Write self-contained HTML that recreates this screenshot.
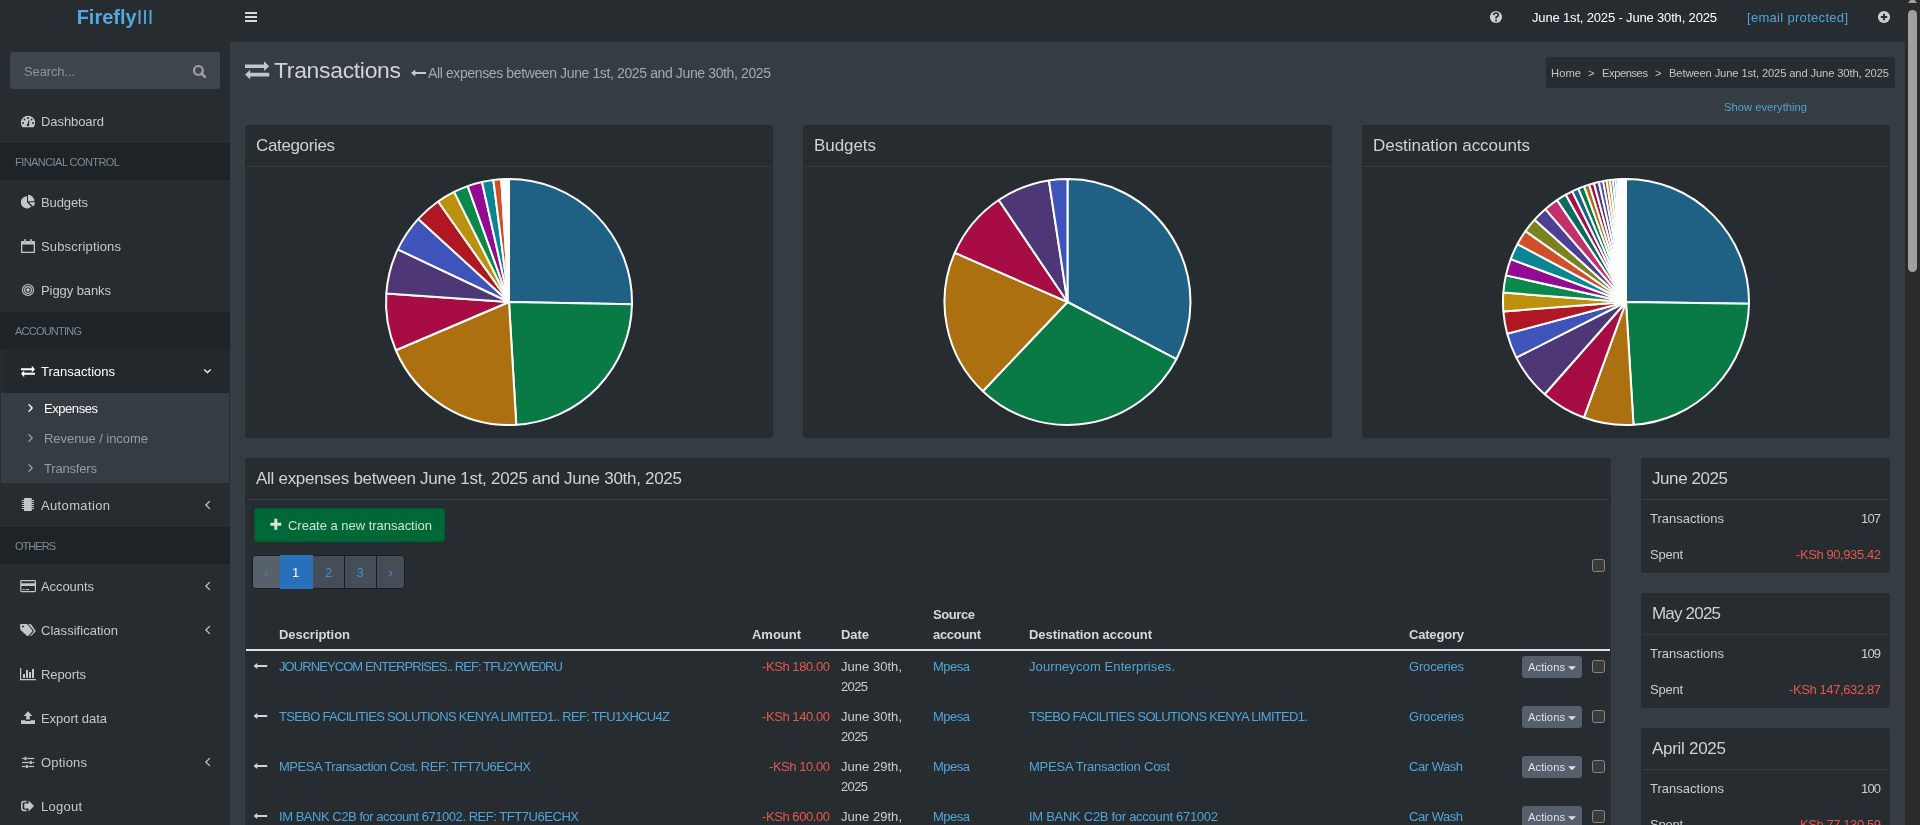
<!DOCTYPE html>
<html><head><meta charset="utf-8"><title>Firefly III</title><style>
*{box-sizing:border-box;margin:0;padding:0}
html,body{width:1920px;height:825px;overflow:hidden;background:#353c42;font-family:"Liberation Sans",sans-serif;}
#root{position:absolute;left:0;top:0;width:1920px;height:825px;overflow:hidden;will-change:transform}
.abs{position:absolute}
.t{position:absolute;white-space:nowrap;line-height:20px;height:20px}
.box{position:absolute;background:#272c30;border-radius:3px}
.hr{position:absolute;height:1px;background:#343a3f}
</style></head>
<body><div id="root">
<div class="abs" style="left:0px;top:0px;width:1905px;height:42px;background:#272c30;"></div>
<div class="abs" style="left:0px;top:42px;width:230px;height:783px;background:#272c30;"></div>
<div class="abs" style="left:0;top:0;width:230px;height:34px;line-height:35px;text-align:center;font-size:20px;color:#52a9dd;white-space:nowrap"><b>Firefly</b><span style="font-weight:400">III</span></div>
<div class="abs" style="left:10px;top:52px;width:210px;height:37px;background:#3e454d;border-radius:3px"></div>
<div class="abs" style="left:0px;top:143px;width:230px;height:37px;background:#1e2326;"></div>
<div class="abs" style="left:0px;top:312px;width:230px;height:37px;background:#1e2326;"></div>
<div class="abs" style="left:0px;top:527px;width:230px;height:37px;background:#1e2326;"></div>
<div class="abs" style="left:0px;top:349px;width:230px;height:44px;background:#23282c;border-left:3px solid #272c30"></div>
<div class="abs" style="left:1px;top:393px;width:228px;height:90px;background:#353c42;"></div>
<div class="abs" style="left:1905px;top:0px;width:15px;height:825px;background:#2b2b2b;"></div>
<div class="abs" style="left:1908px;top:10px;width:9px;height:262px;background:#a0a0a0;border-radius:4.5px"></div>
<svg class="abs" style="left:1905px;top:0" width="15" height="6"><path d="M3 3L7.5 -3L12 3Z" fill="#a0a0a0"/></svg>
<div class="abs" style="left:1546px;top:57px;width:349px;height:31px;background:#272c30;border-radius:2px"></div>
<div class="abs" style="left:245px;top:125px;width:528px;height:313px;background:#272c30;border-radius:3px"></div>
<div class="abs" style="left:246px;top:166px;width:526px;height:1px;background:#353c42;"></div>
<div class="abs" style="left:803px;top:125px;width:529px;height:313px;background:#272c30;border-radius:3px"></div>
<div class="abs" style="left:804px;top:166px;width:527px;height:1px;background:#353c42;"></div>
<div class="abs" style="left:1362px;top:125px;width:528px;height:313px;background:#272c30;border-radius:3px"></div>
<div class="abs" style="left:1363px;top:166px;width:526px;height:1px;background:#353c42;"></div>
<div class="abs" style="left:245px;top:458px;width:1366px;height:400px;background:#272c30;border-radius:3px"></div>
<div class="abs" style="left:246px;top:499px;width:1364px;height:1px;background:#353c42;"></div>
<div class="abs" style="left:1641px;top:458px;width:249px;height:115px;background:#272c30;border-radius:3px"></div>
<div class="abs" style="left:1642px;top:499px;width:247px;height:1px;background:#353c42;"></div>
<div class="abs" style="left:1641px;top:593px;width:249px;height:115px;background:#272c30;border-radius:3px"></div>
<div class="abs" style="left:1642px;top:634px;width:247px;height:1px;background:#353c42;"></div>
<div class="abs" style="left:1641px;top:728px;width:249px;height:115px;background:#272c30;border-radius:3px"></div>
<div class="abs" style="left:1642px;top:769px;width:247px;height:1px;background:#353c42;"></div>
<div class="abs" style="left:254px;top:508px;width:191px;height:34px;background:#006837;border-radius:3px;border:1px solid #005c30"></div>
<div class="abs" style="left:252px;top:555px;width:153px;height:34px;background:#454e57;border-radius:4px;border:1px solid #191c1f"></div>
<div class="abs" style="left:253px;top:556px;width:27px;height:32px;background:#56616c;border-radius:3px 0 0 3px"></div>
<div class="abs" style="left:280px;top:555px;width:33px;height:34px;background:#2970bb;"></div>
<div class="abs" style="left:344px;top:556px;width:1px;height:32px;background:#191c1f;"></div>
<div class="abs" style="left:376px;top:556px;width:1px;height:32px;background:#191c1f;"></div>
<div class="abs" style="left:246px;top:649px;width:1364px;height:2px;background:#dfe4ec;"></div>
<div class="abs" style="left:1592px;top:559px;width:13px;height:13px;background:#3b3b3b;border:1px solid #8a8782;border-radius:2.5px"></div>
<div class="abs" style="left:1592px;top:660px;width:13px;height:13px;background:#3b3b3b;border:1px solid #8a8782;border-radius:2.5px"></div>
<div class="abs" style="left:1592px;top:710px;width:13px;height:13px;background:#3b3b3b;border:1px solid #8a8782;border-radius:2.5px"></div>
<div class="abs" style="left:1592px;top:760px;width:13px;height:13px;background:#3b3b3b;border:1px solid #8a8782;border-radius:2.5px"></div>
<div class="abs" style="left:1592px;top:810px;width:13px;height:13px;background:#3b3b3b;border:1px solid #8a8782;border-radius:2.5px"></div>
<div class="abs" style="left:1522px;top:656px;width:60px;height:22px;background:#55606c;border-radius:3px"></div>
<div class="abs" style="left:1522px;top:706px;width:60px;height:22px;background:#55606c;border-radius:3px"></div>
<div class="abs" style="left:1522px;top:756px;width:60px;height:22px;background:#55606c;border-radius:3px"></div>
<div class="abs" style="left:1522px;top:806px;width:60px;height:22px;background:#55606c;border-radius:3px"></div>
<svg class="abs" style="left:230px;top:160px" width="1675" height="290" viewBox="230 160 1675 290"><g stroke="#fff" stroke-width="2" stroke-linejoin="bevel">
<path d="M509 302L509.00 179.00A123 123 0 0 1 631.98 304.36Z" fill="#1f6184"/>
<path d="M509 302L631.98 304.36A123 123 0 0 1 516.29 424.78Z" fill="#097945"/>
<path d="M509 302L516.29 424.78A123 123 0 0 1 395.86 350.26Z" fill="#ac7010"/>
<path d="M509 302L395.86 350.26A123 123 0 0 1 386.30 293.42Z" fill="#a80c45"/>
<path d="M509 302L386.30 293.42A123 123 0 0 1 397.80 249.43Z" fill="#4d3776"/>
<path d="M509 302L397.80 249.43A123 123 0 0 1 418.31 218.90Z" fill="#3f54bb"/>
<path d="M509 302L418.31 218.90A123 123 0 0 1 438.10 201.49Z" fill="#b11722"/>
<path d="M509 302L438.10 201.49A123 123 0 0 1 454.12 191.92Z" fill="#bb910e"/>
<path d="M509 302L454.12 191.92A123 123 0 0 1 467.74 186.13Z" fill="#0b894d"/>
<path d="M509 302L467.74 186.13A123 123 0 0 1 481.96 182.01Z" fill="#920b92"/>
<path d="M509 302L481.96 182.01A123 123 0 0 1 493.37 180.00Z" fill="#0b8594"/>
<path d="M509 302L493.37 180.00A123 123 0 0 1 501.28 179.24Z" fill="#cf4f29"/>
<path d="M509 302L501.28 179.24A123 123 0 0 1 503.42 179.13Z" fill="#7b8320"/>
<path d="M509 302L503.42 179.13A123 123 0 0 1 504.92 179.07Z" fill="#4e3f94"/>
<path d="M509 302L504.92 179.07A123 123 0 0 1 506.21 179.03Z" fill="#c3306b"/>
<path d="M509 302L506.21 179.03A123 123 0 0 1 507.28 179.01Z" fill="#0b6b5f"/>
<path d="M509 302L507.28 179.01A123 123 0 0 1 508.14 179.00Z" fill="#a1124a"/>
<path d="M509 302L508.14 179.00A123 123 0 0 1 509.00 179.00Z" fill="#1f6184"/>
</g><g stroke="#fff" stroke-width="2" stroke-linejoin="bevel">
<path d="M1067.5 302L1067.50 179.00A123 123 0 0 1 1176.40 359.18Z" fill="#1f6184"/>
<path d="M1067.5 302L1176.40 359.18A123 123 0 0 1 982.83 391.22Z" fill="#097945"/>
<path d="M1067.5 302L982.83 391.22A123 123 0 0 1 954.79 252.76Z" fill="#ac7010"/>
<path d="M1067.5 302L954.79 252.76A123 123 0 0 1 998.72 200.03Z" fill="#a80c45"/>
<path d="M1067.5 302L998.72 200.03A123 123 0 0 1 1048.89 180.42Z" fill="#4d3776"/>
<path d="M1067.5 302L1048.89 180.42A123 123 0 0 1 1067.50 179.00Z" fill="#3f54bb"/>
</g><g stroke="#fff" stroke-width="2" stroke-linejoin="bevel">
<path d="M1626 302L1626.00 179.00A123 123 0 0 1 1748.99 303.72Z" fill="#1f6184"/>
<path d="M1626 302L1748.99 303.72A123 123 0 0 1 1633.51 424.77Z" fill="#097945"/>
<path d="M1626 302L1633.51 424.77A123 123 0 0 1 1583.83 417.55Z" fill="#ac7010"/>
<path d="M1626 302L1583.83 417.55A123 123 0 0 1 1544.66 394.26Z" fill="#a80c45"/>
<path d="M1626 302L1544.66 394.26A123 123 0 0 1 1516.31 357.65Z" fill="#4d3776"/>
<path d="M1626 302L1516.31 357.65A123 123 0 0 1 1507.19 333.83Z" fill="#3f54bb"/>
<path d="M1626 302L1507.19 333.83A123 123 0 0 1 1503.36 311.44Z" fill="#b11722"/>
<path d="M1626 302L1503.36 311.44A123 123 0 0 1 1503.36 292.56Z" fill="#bb910e"/>
<path d="M1626 302L1503.36 292.56A123 123 0 0 1 1505.92 275.38Z" fill="#0b894d"/>
<path d="M1626 302L1505.92 275.38A123 123 0 0 1 1510.71 259.13Z" fill="#920b92"/>
<path d="M1626 302L1510.71 259.13A123 123 0 0 1 1517.50 244.07Z" fill="#0b8594"/>
<path d="M1626 302L1517.50 244.07A123 123 0 0 1 1525.49 231.10Z" fill="#cf4f29"/>
<path d="M1626 302L1525.49 231.10A123 123 0 0 1 1534.59 219.70Z" fill="#7b8320"/>
<path d="M1626 302L1534.59 219.70A123 123 0 0 1 1545.30 209.17Z" fill="#4e3f94"/>
<path d="M1626 302L1545.30 209.17A123 123 0 0 1 1557.04 200.15Z" fill="#c3306b"/>
<path d="M1626 302L1557.04 200.15A123 123 0 0 1 1565.81 194.74Z" fill="#0b6b5f"/>
<path d="M1626 302L1565.81 194.74A123 123 0 0 1 1572.27 191.35Z" fill="#a1124a"/>
<path d="M1626 302L1572.27 191.35A123 123 0 0 1 1578.34 188.61Z" fill="#1f6184"/>
<path d="M1626 302L1578.34 188.61A123 123 0 0 1 1584.13 186.34Z" fill="#097945"/>
<path d="M1626 302L1584.13 186.34A123 123 0 0 1 1589.22 184.63Z" fill="#ac7010"/>
<path d="M1626 302L1589.22 184.63A123 123 0 0 1 1593.96 183.25Z" fill="#a80c45"/>
<path d="M1626 302L1593.96 183.25A123 123 0 0 1 1598.75 182.06Z" fill="#4d3776"/>
<path d="M1626 302L1598.75 182.06A123 123 0 0 1 1603.16 181.14Z" fill="#3f54bb"/>
<path d="M1626 302L1603.16 181.14A123 123 0 0 1 1606.55 180.55Z" fill="#b11722"/>
<path d="M1626 302L1606.55 180.55A123 123 0 0 1 1609.95 180.05Z" fill="#bb910e"/>
<path d="M1626 302L1609.95 180.05A123 123 0 0 1 1612.93 179.70Z" fill="#0b894d"/>
<path d="M1626 302L1612.93 179.70A123 123 0 0 1 1615.49 179.45Z" fill="#920b92"/>
<path d="M1626 302L1615.49 179.45A123 123 0 0 1 1617.85 179.27Z" fill="#0b8594"/>
<path d="M1626 302L1617.85 179.27A123 123 0 0 1 1619.78 179.16Z" fill="#cf4f29"/>
<path d="M1626 302L1619.78 179.16A123 123 0 0 1 1621.28 179.09Z" fill="#7b8320"/>
<path d="M1626 302L1621.28 179.09A123 123 0 0 1 1622.57 179.05Z" fill="#4e3f94"/>
<path d="M1626 302L1622.57 179.05A123 123 0 0 1 1623.64 179.02Z" fill="#c3306b"/>
<path d="M1626 302L1623.64 179.02A123 123 0 0 1 1624.50 179.01Z" fill="#0b6b5f"/>
<path d="M1626 302L1624.50 179.01A123 123 0 0 1 1625.14 179.00Z" fill="#a1124a"/>
<path d="M1626 302L1625.14 179.00A123 123 0 0 1 1625.57 179.00Z" fill="#1f6184"/>
<path d="M1626 302L1625.57 179.00A123 123 0 0 1 1626.00 179.00Z" fill="#097945"/>
</g></svg>
<svg class="abs" style="left:0;top:0" width="1920" height="825" viewBox="0 0 1920 825"><g fill="#d5dae0"><rect x="245" y="12" width="12" height="2"/><rect x="245" y="16" width="12" height="2"/><rect x="245" y="20" width="12" height="2"/></g>
<circle cx="1496" cy="17" r="6.1" fill="#c9ced4"/>
<path d="M1493.7 15.2Q1493.9 13 1496 13Q1498.3 13 1498.3 15Q1498.3 16.3 1496.1 17.3V18.6" fill="none" stroke="#272c30" stroke-width="1.7"/><rect x="1495.2" y="19.6" width="1.8" height="1.8" fill="#272c30"/>
<circle cx="1884" cy="17" r="6.1" fill="#c9ced4"/>
<path d="M1884 13.8V20.2M1880.8 17H1887.2" stroke="#272c30" stroke-width="1.9" fill="none"/>
<circle cx="198.4" cy="70.4" r="4.4" fill="none" stroke="#a3a3a3" stroke-width="2.1"/><path d="M201.6 73.6L204.9 76.9" stroke="#a3a3a3" stroke-width="2.4" stroke-linecap="round"/>
<path fill="#c2c7cc" d="M22.4 127.2A7.1 7.1 0 1 1 33.6 127.2Z"/>
<g fill="#272c30"><rect x="27.1" y="117.1" width="1.7" height="1.8"/><circle cx="24.5" cy="119.5" r="0.9"/><circle cx="31.6" cy="119.5" r="0.9"/><rect x="22.2" y="122.1" width="1.7" height="1.8"/><rect x="32.2" y="122.1" width="1.7" height="1.8"/><circle cx="28" cy="125" r="1.3"/><path d="M27.4 125L28.6 120.3L29.6 120.5L28.8 125Z"/></g>
<path fill="#c2c7cc" d="M27 202.3V196.2A6.1 6.1 0 1 0 31.3 206.6Z"/>
<path fill="#c2c7cc" d="M28 201.2V194.8A6.4 6.4 0 0 1 34.4 201.2Z"/>
<path fill="#c2c7cc" d="M29 202.3H34.9A6.1 6.1 0 0 1 33.2 206.5Z"/>
<path fill="#c2c7cc" fill-rule="evenodd" d="M21 241.8Q21 241 21.8 241H34.2Q35 241 35 241.8V252.2Q35 253 34.2 253H21.8Q21 253 21 252.2ZM22.3 244.4V251.8H33.7V244.4Z"/>
<rect x="24" y="239" width="2" height="4" rx="0.8" fill="#a9afb5"/><rect x="30" y="239" width="2" height="4" rx="0.8" fill="#a9afb5"/>
<circle cx="28" cy="290" r="5.5" fill="none" stroke="#c2c7cc" stroke-width="1.2"/><circle cx="28" cy="290" r="3.4" fill="none" stroke="#c2c7cc" stroke-width="1.1"/><circle cx="28" cy="290" r="1.7" fill="#c2c7cc"/>
<path fill="#ffffff" d="M35 369.2L31.8 365.8V368.2H21V370.2H31.8V372.59999999999997Z"/>
<path fill="#ffffff" d="M21 373.8L24.2 370.40000000000003V372.8H35V374.8H24.2V377.2Z"/>
<path d="M204.3 369.5L207.5 372.7L210.7 369.5" fill="none" stroke="#ffffff" stroke-width="1.3"/>
<path d="M28.6 404.2L32.2 408L28.6 411.8" fill="none" stroke="#ffffff" stroke-width="1.3"/>
<path d="M28.6 434.2L32.2 438L28.6 441.8" fill="none" stroke="#949da5" stroke-width="1.3"/>
<path d="M28.6 464.2L32.2 468L28.6 471.8" fill="none" stroke="#949da5" stroke-width="1.3"/>
<path d="M209.8 501.1L205.9 505L209.8 508.9" fill="none" stroke="#c2c7cc" stroke-width="1.3"/>
<path d="M209.8 582.1L205.9 586L209.8 589.9" fill="none" stroke="#c2c7cc" stroke-width="1.3"/>
<path d="M209.8 626.1L205.9 630L209.8 633.9" fill="none" stroke="#c2c7cc" stroke-width="1.3"/>
<path d="M209.8 758.1L205.9 762L209.8 765.9" fill="none" stroke="#c2c7cc" stroke-width="1.3"/>
<rect x="24" y="498" width="7.8" height="13" rx="0.6" fill="#c2c7cc"/>
<rect x="21.8" y="500" width="2.2" height="1" fill="#c2c7cc"/><rect x="31.8" y="500" width="2.2" height="1" fill="#c2c7cc"/>
<rect x="21.8" y="502" width="2.2" height="1" fill="#c2c7cc"/><rect x="31.8" y="502" width="2.2" height="1" fill="#c2c7cc"/>
<rect x="21.8" y="504" width="2.2" height="1" fill="#c2c7cc"/><rect x="31.8" y="504" width="2.2" height="1" fill="#c2c7cc"/>
<rect x="21.8" y="506" width="2.2" height="1" fill="#c2c7cc"/><rect x="31.8" y="506" width="2.2" height="1" fill="#c2c7cc"/>
<rect x="21.8" y="508" width="2.2" height="1" fill="#c2c7cc"/><rect x="31.8" y="508" width="2.2" height="1" fill="#c2c7cc"/>
<path fill="#c2c7cc" fill-rule="evenodd" d="M20.2 581.4Q20.2 580 21.6 580H34.6Q36 580 36 581.4V590.8Q36 592.2 34.6 592.2H21.6Q20.2 592.2 20.2 590.8ZM21.4 581.2V583.2H34.8V581.2ZM21.4 586V591H34.8V586Z"/>
<rect x="22.6" y="589" width="2.2" height="1" fill="#c2c7cc"/><rect x="25.8" y="589" width="3.2" height="1" fill="#c2c7cc"/>
<path fill="#c2c7cc" fill-rule="evenodd" d="M20.2 624.6Q20.2 624 20.8 624H26.2Q27 624 27.6 624.6L32.2 630.2Q32.8 631 32.2 631.7L28.3 635.7Q27.6 636.3 26.9 635.7L20.8 630.2Q20.2 629.6 20.2 628.8ZM23 625.5A1 1 0 1 0 23 627.5A1 1 0 1 0 23 625.5Z"/>
<path fill="#c2c7cc" d="M28.3 624H29.8Q30.6 624 31.2 624.6L35.3 630.2Q35.9 631 35.3 631.7L31.4 635.7Q30.7 636.3 30 635.9L33.6 631.7Q34.1 631 33.6 630.2Z"/>
<path fill="#c2c7cc" d="M20 668H21.2V679H36V680.2H20Z"/>
<g fill="#c2c7cc"><rect x="23" y="674" width="2" height="4"/><rect x="26" y="670" width="2" height="8"/><rect x="29" y="672" width="2" height="6"/><rect x="32" y="669" width="2" height="9"/></g>
<path fill="#c2c7cc" d="M28 711.3L32.4 716H29.8V719.6H26.2V716H23.6Z"/>
<path fill="#c2c7cc" d="M21 720.3H25.4V720.9H30.6V720.3H35V724H21Z"/>
<rect x="22" y="757.9" width="12.2" height="1.2" fill="#c2c7cc"/><rect x="24" y="756.9" width="3" height="3.2" fill="#c2c7cc" stroke="#272c30" stroke-width="0.5"/>
<rect x="22" y="761.9" width="12.2" height="1.2" fill="#c2c7cc"/><rect x="29.2" y="760.9" width="3" height="3.2" fill="#c2c7cc" stroke="#272c30" stroke-width="0.5"/>
<rect x="22" y="765.9" width="12.2" height="1.2" fill="#c2c7cc"/><rect x="25.2" y="764.9" width="3" height="3.2" fill="#c2c7cc" stroke="#272c30" stroke-width="0.5"/>
<path d="M26.6 801.6H24Q21.8 801.6 21.8 803.8V808.2Q21.8 810.4 24 810.4H26.6" fill="none" stroke="#c2c7cc" stroke-width="1.5"/>
<path fill="#c2c7cc" d="M24.3 803.6H28.6V800.6L34 806L28.6 811.4V808.4H24.3Z"/>
<path fill="#c0c6cc" d="M269.2 66.2L264.0 61.300000000000004V64.4H245V68.0H264.0V71.10000000000001Z"/>
<path fill="#c0c6cc" d="M245 74.6L250.2 69.69999999999999V72.8H269.2V76.39999999999999H250.2V79.5Z"/>
<path fill="#c5cbd2" d="M411 73L415.3 69.6V72.0H426V74.0H415.3V76.4Z"/>
<path fill="#d0d5db" d="M253.5 666L257.3 662.9V665.0H267.2V667.0H257.3V669.1Z"/>
<path fill="#d0d5db" d="M253.5 716L257.3 712.9V715.0H267.2V717.0H257.3V719.1Z"/>
<path fill="#d0d5db" d="M253.5 766L257.3 762.9V765.0H267.2V767.0H257.3V769.1Z"/>
<path fill="#d0d5db" d="M253.5 816L257.3 812.9V815.0H267.2V817.0H257.3V819.1Z"/>
<path d="M275.8 518.8V529.8M270.3 524.3H281.3" stroke="#d5e5dc" stroke-width="3" fill="none"/>
<path d="M1568 666.2H1576L1572 670.2Z" fill="#dde1e6"/>
<path d="M1568 716.2H1576L1572 720.2Z" fill="#dde1e6"/>
<path d="M1568 766.2H1576L1572 770.2Z" fill="#dde1e6"/>
<path d="M1568 816.2H1576L1572 820.2Z" fill="#dde1e6"/></svg>
<span class="t" style="left:1532px;top:8.0px;font-size:13px;color:#ffffff;letter-spacing:-0.164px;">June 1st, 2025 - June 30th, 2025</span>
<span class="t" style="left:1747px;top:8.0px;font-size:13px;color:#51a4d7;letter-spacing:0.306px;">[email protected]</span>
<span class="t" style="left:24px;top:62.0px;font-size:13px;color:#8d9399;letter-spacing:-0.129px;">Search...</span>
<span class="t" style="left:41px;top:112.0px;font-size:13px;color:#c5c8cb;letter-spacing:-0.076px;">Dashboard</span>
<span class="t" style="left:15px;top:152.0px;font-size:11px;color:#7f8b95;letter-spacing:-0.556px;">FINANCIAL CONTROL</span>
<span class="t" style="left:41px;top:193.0px;font-size:13px;color:#c5c8cb;letter-spacing:-0.117px;">Budgets</span>
<span class="t" style="left:41px;top:237.0px;font-size:13px;color:#c5c8cb;letter-spacing:0.163px;">Subscriptions</span>
<span class="t" style="left:41px;top:281.0px;font-size:13px;color:#c5c8cb;letter-spacing:-0.083px;">Piggy banks</span>
<span class="t" style="left:15px;top:321.0px;font-size:11px;color:#7f8b95;letter-spacing:-0.773px;">ACCOUNTING</span>
<span class="t" style="left:41px;top:362.0px;font-size:13px;color:#ffffff;letter-spacing:0.006px;">Transactions</span>
<span class="t" style="left:44px;top:399.0px;font-size:13px;color:#ffffff;letter-spacing:-0.442px;">Expenses</span>
<span class="t" style="left:44px;top:429.0px;font-size:13px;color:#949da5;letter-spacing:-0.052px;">Revenue / income</span>
<span class="t" style="left:44px;top:459.0px;font-size:13px;color:#949da5;letter-spacing:-0.178px;">Transfers</span>
<span class="t" style="left:41px;top:496.0px;font-size:13px;color:#c5c8cb;letter-spacing:0.359px;">Automation</span>
<span class="t" style="left:15px;top:536.0px;font-size:11px;color:#7f8b95;letter-spacing:-0.969px;">OTHERS</span>
<span class="t" style="left:41px;top:577.0px;font-size:13px;color:#c5c8cb;letter-spacing:-0.069px;">Accounts</span>
<span class="t" style="left:41px;top:621.0px;font-size:13px;color:#c5c8cb;letter-spacing:0.031px;">Classification</span>
<span class="t" style="left:41px;top:665.0px;font-size:13px;color:#c5c8cb;letter-spacing:-0.089px;">Reports</span>
<span class="t" style="left:41px;top:709.0px;font-size:13px;color:#c5c8cb;letter-spacing:-0.050px;">Export data</span>
<span class="t" style="left:41px;top:753.0px;font-size:13px;color:#c5c8cb;letter-spacing:0.198px;">Options</span>
<span class="t" style="left:41px;top:797.0px;font-size:13px;color:#c5c8cb;letter-spacing:0.247px;">Logout</span>
<span class="t" style="left:274px;top:60.0px;font-size:22.9px;color:#d0d3d6;letter-spacing:-0.291px;">Transactions</span>
<span class="t" style="left:428px;top:63.0px;font-size:14px;color:#a4aab0;letter-spacing:-0.380px;">All expenses between June 1st, 2025 and June 30th, 2025</span>
<span class="t" style="left:1551px;top:63.0px;font-size:11.2px;color:#c0c4c8;letter-spacing:0.052px;">Home</span>
<span class="t" style="left:1588px;top:63.0px;font-size:11.2px;color:#c0c4c8;letter-spacing:-0.547px;">&gt;</span>
<span class="t" style="left:1602px;top:63.0px;font-size:11.2px;color:#c0c4c8;letter-spacing:-0.449px;">Expenses</span>
<span class="t" style="left:1655px;top:63.0px;font-size:11.2px;color:#c0c4c8;letter-spacing:-0.547px;">&gt;</span>
<span class="t" style="left:1669px;top:63.0px;font-size:11.2px;color:#c0c4c8;letter-spacing:-0.126px;">Between June 1st, 2025 and June 30th, 2025</span>
<span class="t" style="left:1724px;top:97.0px;font-size:11.2px;color:#51a4d7;letter-spacing:0.020px;">Show everything</span>
<span class="t" style="left:256px;top:136.0px;font-size:17px;color:#cfd2d5;letter-spacing:-0.358px;">Categories</span>
<span class="t" style="left:814px;top:136.0px;font-size:17px;color:#cfd2d5;letter-spacing:-0.065px;">Budgets</span>
<span class="t" style="left:1373px;top:136.0px;font-size:17px;color:#cfd2d5;letter-spacing:-0.044px;">Destination accounts</span>
<span class="t" style="left:256px;top:469.0px;font-size:17px;color:#cfd2d5;letter-spacing:-0.285px;">All expenses between June 1st, 2025 and June 30th, 2025</span>
<span class="t" style="left:288px;top:516.0px;font-size:13px;color:#cfe3d7;letter-spacing:-0.023px;">Create a new transaction</span>
<span class="t" style="left:264px;top:563.0px;font-size:13px;color:#6d7780;">‹</span>
<span class="t" style="left:292px;top:563.0px;font-size:13px;color:#ffffff;">1</span>
<span class="t" style="left:325px;top:563.0px;font-size:13px;color:#3794cd;">2</span>
<span class="t" style="left:356.5px;top:563.0px;font-size:13px;color:#3794cd;">3</span>
<span class="t" style="left:388.5px;top:563.0px;font-size:13px;color:#3794cd;">›</span>
<span class="t" style="left:279px;top:625.0px;font-size:13px;color:#d6d9dc;font-weight:700;letter-spacing:-0.052px;">Description</span>
<span class="t" style="left:752px;top:625.0px;font-size:13px;color:#d6d9dc;font-weight:700;letter-spacing:-0.022px;">Amount</span>
<span class="t" style="left:841px;top:625.0px;font-size:13px;color:#d6d9dc;font-weight:700;letter-spacing:-0.062px;">Date</span>
<span class="t" style="left:933px;top:605.0px;font-size:13px;color:#d6d9dc;font-weight:700;letter-spacing:-0.416px;">Source</span>
<span class="t" style="left:933px;top:625.0px;font-size:13px;color:#d6d9dc;font-weight:700;letter-spacing:-0.307px;">account</span>
<span class="t" style="left:1029px;top:625.0px;font-size:13px;color:#d6d9dc;font-weight:700;letter-spacing:-0.069px;">Destination account</span>
<span class="t" style="left:1409px;top:625.0px;font-size:13px;color:#d6d9dc;font-weight:700;letter-spacing:-0.194px;">Category</span>
<span class="t" style="left:279px;top:657.0px;font-size:13px;color:#51a4d7;letter-spacing:-0.917px;">JOURNEYCOM ENTERPRISES.. REF: TFU2YWE0RU</span>
<span class="t" style="left:762px;top:657.0px;font-size:13px;color:#e4584f;letter-spacing:-0.428px;">-KSh 180.00</span>
<span class="t" style="left:841px;top:657.0px;font-size:13px;color:#c9cdd0;letter-spacing:0.031px;">June 30th,</span>
<span class="t" style="left:841px;top:677.0px;font-size:13px;color:#c9cdd0;letter-spacing:-0.641px;">2025</span>
<span class="t" style="left:933px;top:657.0px;font-size:13px;color:#51a4d7;letter-spacing:-0.508px;">Mpesa</span>
<span class="t" style="left:1029px;top:657.0px;font-size:13px;color:#51a4d7;letter-spacing:0.101px;">Journeycom Enterprises.</span>
<span class="t" style="left:1409px;top:657.0px;font-size:13px;color:#51a4d7;letter-spacing:-0.170px;">Groceries</span>
<span class="t" style="left:1528px;top:657.0px;font-size:11.2px;color:#dfe2e5;letter-spacing:0.052px;">Actions</span>
<span class="t" style="left:279px;top:707.0px;font-size:13px;color:#51a4d7;letter-spacing:-0.699px;">TSEBO FACILITIES SOLUTIONS KENYA LIMITED1.. REF: TFU1XHCU4Z</span>
<span class="t" style="left:762px;top:707.0px;font-size:13px;color:#e4584f;letter-spacing:-0.428px;">-KSh 140.00</span>
<span class="t" style="left:841px;top:707.0px;font-size:13px;color:#c9cdd0;letter-spacing:0.031px;">June 30th,</span>
<span class="t" style="left:841px;top:727.0px;font-size:13px;color:#c9cdd0;letter-spacing:-0.641px;">2025</span>
<span class="t" style="left:933px;top:707.0px;font-size:13px;color:#51a4d7;letter-spacing:-0.508px;">Mpesa</span>
<span class="t" style="left:1029px;top:707.0px;font-size:13px;color:#51a4d7;letter-spacing:-0.678px;">TSEBO FACILITIES SOLUTIONS KENYA LIMITED1.</span>
<span class="t" style="left:1409px;top:707.0px;font-size:13px;color:#51a4d7;letter-spacing:-0.170px;">Groceries</span>
<span class="t" style="left:1528px;top:707.0px;font-size:11.2px;color:#dfe2e5;letter-spacing:0.052px;">Actions</span>
<span class="t" style="left:279px;top:757.0px;font-size:13px;color:#51a4d7;letter-spacing:-0.472px;">MPESA Transaction Cost. REF: TFT7U6ECHX</span>
<span class="t" style="left:769px;top:757.0px;font-size:13px;color:#e4584f;letter-spacing:-0.450px;">-KSh 10.00</span>
<span class="t" style="left:841px;top:757.0px;font-size:13px;color:#c9cdd0;letter-spacing:0.031px;">June 29th,</span>
<span class="t" style="left:841px;top:777.0px;font-size:13px;color:#c9cdd0;letter-spacing:-0.641px;">2025</span>
<span class="t" style="left:933px;top:757.0px;font-size:13px;color:#51a4d7;letter-spacing:-0.508px;">Mpesa</span>
<span class="t" style="left:1029px;top:757.0px;font-size:13px;color:#51a4d7;letter-spacing:-0.236px;">MPESA Transaction Cost</span>
<span class="t" style="left:1409px;top:757.0px;font-size:13px;color:#51a4d7;letter-spacing:-0.473px;">Car Wash</span>
<span class="t" style="left:1528px;top:757.0px;font-size:11.2px;color:#dfe2e5;letter-spacing:0.052px;">Actions</span>
<span class="t" style="left:279px;top:807.0px;font-size:13px;color:#51a4d7;letter-spacing:-0.463px;">IM BANK C2B for account 671002. REF: TFT7U6ECHX</span>
<span class="t" style="left:762px;top:807.0px;font-size:13px;color:#e4584f;letter-spacing:-0.428px;">-KSh 600.00</span>
<span class="t" style="left:841px;top:807.0px;font-size:13px;color:#c9cdd0;letter-spacing:0.031px;">June 29th,</span>
<span class="t" style="left:841px;top:827.0px;font-size:13px;color:#c9cdd0;letter-spacing:-0.641px;">2025</span>
<span class="t" style="left:933px;top:807.0px;font-size:13px;color:#51a4d7;letter-spacing:-0.508px;">Mpesa</span>
<span class="t" style="left:1029px;top:807.0px;font-size:13px;color:#51a4d7;letter-spacing:-0.286px;">IM BANK C2B for account 671002</span>
<span class="t" style="left:1409px;top:807.0px;font-size:13px;color:#51a4d7;letter-spacing:-0.473px;">Car Wash</span>
<span class="t" style="left:1528px;top:807.0px;font-size:11.2px;color:#dfe2e5;letter-spacing:0.052px;">Actions</span>
<span class="t" style="left:1652px;top:469.0px;font-size:17px;color:#cfd2d5;letter-spacing:-0.426px;">June 2025</span>
<span class="t" style="left:1650px;top:509.0px;font-size:13px;color:#c9cdd0;letter-spacing:0.006px;">Transactions</span>
<span class="t" style="left:1861px;top:509.0px;font-size:13px;color:#c9cdd0;letter-spacing:-0.852px;">107</span>
<span class="t" style="left:1650px;top:545.0px;font-size:13px;color:#c9cdd0;letter-spacing:-0.246px;">Spent</span>
<span class="t" style="left:1796px;top:545.0px;font-size:13px;color:#e4584f;letter-spacing:-0.412px;">-KSh 90,935.42</span>
<span class="t" style="left:1652px;top:604.0px;font-size:17px;color:#cfd2d5;letter-spacing:-0.810px;">May 2025</span>
<span class="t" style="left:1650px;top:644.0px;font-size:13px;color:#c9cdd0;letter-spacing:0.006px;">Transactions</span>
<span class="t" style="left:1861px;top:644.0px;font-size:13px;color:#c9cdd0;letter-spacing:-0.852px;">109</span>
<span class="t" style="left:1650px;top:680.0px;font-size:13px;color:#c9cdd0;letter-spacing:-0.246px;">Spent</span>
<span class="t" style="left:1789px;top:680.0px;font-size:13px;color:#e4584f;letter-spacing:-0.398px;">-KSh 147,632.87</span>
<span class="t" style="left:1652px;top:739.0px;font-size:17px;color:#cfd2d5;letter-spacing:-0.285px;">April 2025</span>
<span class="t" style="left:1650px;top:779.0px;font-size:13px;color:#c9cdd0;letter-spacing:0.006px;">Transactions</span>
<span class="t" style="left:1861px;top:779.0px;font-size:13px;color:#c9cdd0;letter-spacing:-0.852px;">100</span>
<span class="t" style="left:1650px;top:815.0px;font-size:13px;color:#c9cdd0;letter-spacing:-0.246px;">Spent</span>
<span class="t" style="left:1796px;top:815.0px;font-size:13px;color:#e4584f;letter-spacing:-0.412px;">-KSh 77,130.59</span>
</div></body></html>
